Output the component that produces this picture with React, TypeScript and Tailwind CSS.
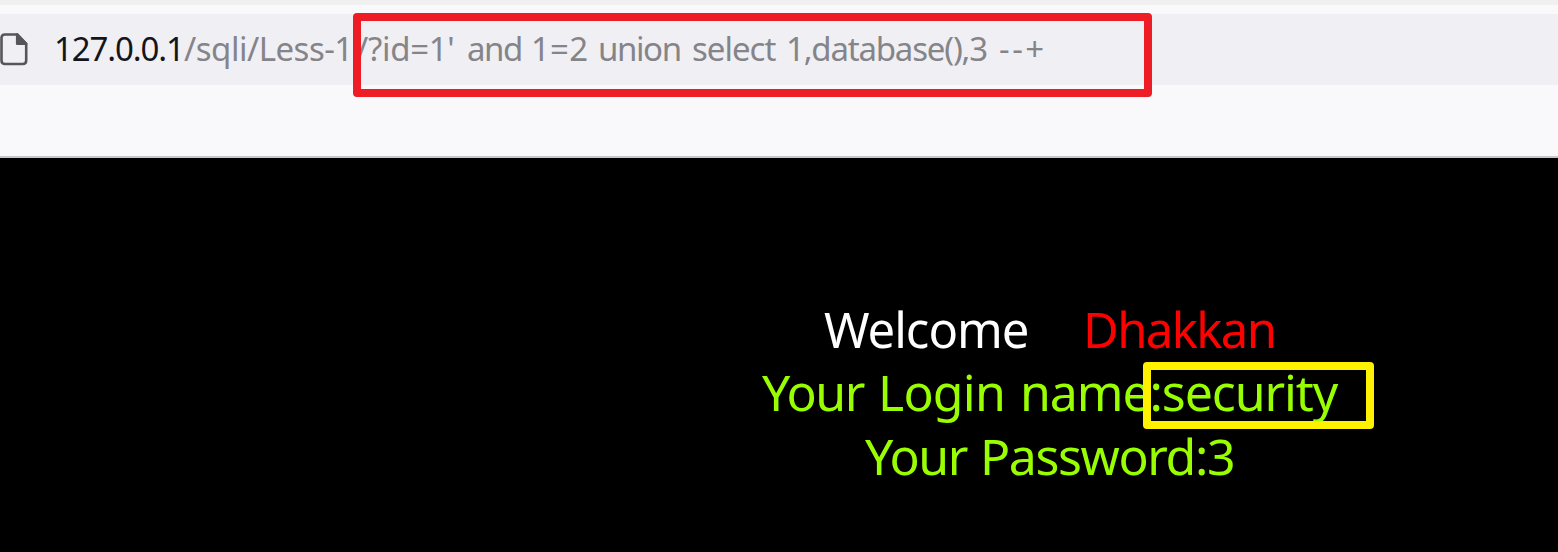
export default function App() {
  return (
    <div className="relative flex h-[552px] w-[1558px] flex-col overflow-hidden bg-black font-['Noto_Sans',sans-serif]">
      <header className="flex h-[158px] flex-col border-b-2 border-[#c8c8c8] bg-[#f9f9fb]">
        <div className="h-[5px] bg-[#f0f0f0]" />
        <div className="mt-[9px] flex h-[71px] items-center bg-[#f0f0f4]">
          <svg className="block h-[34px] w-[30px] shrink-0" viewBox="0 0 30 34" fill="none" stroke="#56565a" strokeWidth="2.6" strokeLinejoin="round">
            <path d="M4.8 1.5H17L26.2 10.8V27.5Q26.2 31 22.7 31H5Q1.5 31 1.5 27.5V4.8Q1.5 1.5 4.8 1.5Z" />
            <path d="M17.2 1.5V10.8H26.2Z" fill="#56565a" />
          </svg>
          <div className="ml-[24px] flex h-[71px] whitespace-pre text-[33px] leading-[70px] text-[#858489]">
            <span className="w-[130px] shrink-0 tracking-[-1.1px] text-[#15141a]">127.0.0.1</span>
            <span className="w-[172px] shrink-0 tracking-[-0.5px]">/sqli/Less-1</span>
            <span className="w-[111px] shrink-0 tracking-[-0.3px]">/?id=1' </span>
            <span className="w-[64px] shrink-0 tracking-[-1.4px]">and </span>
            <span className="w-[67px] shrink-0 tracking-[0.2px]">1=2 </span>
            <span className="w-[94px] shrink-0 tracking-[-1.4px]">union </span>
            <span className="w-[94px] shrink-0 tracking-[-1px]">select </span>
            <span className="w-[213px] shrink-0 tracking-[-1.2px]">1,database(),3 </span>
            <span className="tracking-[2.5px]">--+</span>
          </div>
        </div>
      </header>
      <main className="flex h-[394px] flex-col pt-[140px]">
        <div className="ml-[824px] flex h-[63px] whitespace-pre text-[49px] leading-[63px] text-white">
          <span className="w-[259px] shrink-0 tracking-[-1px]">Welcome</span>
          <span className="tracking-[-1.6px] text-[#ff0000]">Dhakkan</span>
        </div>
        <div className="ml-[762px] flex h-[64px] whitespace-pre text-[50px] leading-[63px] text-[#99ff00]">
          <span className="w-[116px] shrink-0 tracking-[-1.4px]">Your </span>
          <span className="w-[142px] shrink-0 tracking-[-0.8px]">Login </span>
          <span className="tracking-[-1.1px]">name:security</span>
        </div>
        <div className="ml-[865px] flex h-[64px] whitespace-pre text-[50px] leading-[63px] text-[#99ff00]">
          <span className="w-[115px] shrink-0 tracking-[-1.4px]">Your </span>
          <span className="tracking-[-1.4px]">Password:3</span>
        </div>
      </main>
      <div className="absolute left-[353px] top-[13px] h-[84px] w-[799px] rounded-[4px] border-8 border-[#ee1c25]" />
      <div className="absolute left-[1143px] top-[362px] h-[67px] w-[231px] rounded-[4px] border-8 border-[#fff200]" />
    </div>
  );
}
